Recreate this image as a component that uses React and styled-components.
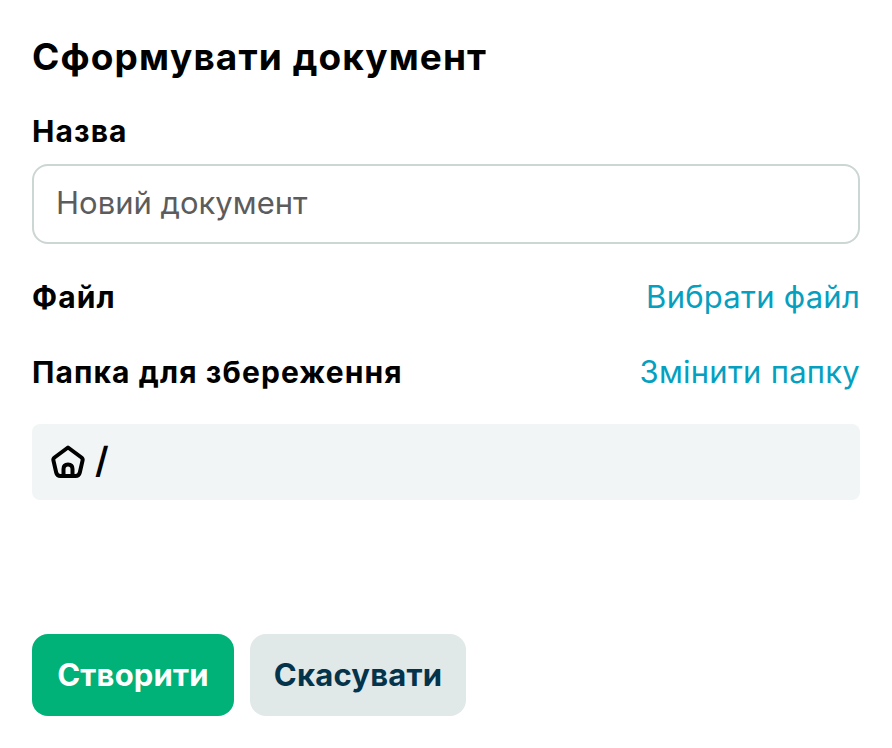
import React from "react";
import styled, { createGlobalStyle } from "styled-components";

const GlobalStyle = createGlobalStyle`
  html, body {
    margin: 0;
    padding: 0;
    background: #ffffff;
  }
  body {
    font-family: Inter, "Noto Sans", sans-serif;
  }
`;

const Page = styled.div`
  width: 892px;
  height: 748px;
  box-sizing: border-box;
  padding: 32px;
  display: flex;
  flex-direction: column;
`;

const Title = styled.h1`
  margin: 0;
  font-size: 37px;
  line-height: 50px;
  letter-spacing: 1.1px;
  font-weight: 700;
  color: #000000;
`;

const Label = styled.div`
  font-size: 30px;
  line-height: 40px;
  letter-spacing: 1.1px;
  font-weight: 700;
  color: #000000;
`;

const NameLabel = styled(Label)`
  margin-top: 29px;
  margin-bottom: 13px;
`;

const NameInput = styled.input`
  width: 100%;
  height: 80px;
  box-sizing: border-box;
  padding: 0 22px 3px;
  border: 2px solid #ccd6d4;
  border-radius: 16px;
  outline: none;
  background: #ffffff;
  font-family: inherit;
  font-size: 31px;
  color: #111111;

  &::placeholder {
    color: #5c5c5c;
    opacity: 1;
  }
`;

const Row = styled.div`
  display: flex;
  align-items: center;
  justify-content: space-between;
  height: 40px;
  margin-top: ${(p) => p.$top}px;
`;

const LinkButton = styled.a`
  font-size: 31px;
  line-height: 40px;
  letter-spacing: 0.25px;
  color: #05a0c0;
  cursor: pointer;
`;

const PathBox = styled.div`
  display: flex;
  align-items: center;
  gap: 9px;
  height: 76px;
  box-sizing: border-box;
  margin-top: 32px;
  padding: 0 18px;
  border-radius: 8px;
  background: #f1f5f5;
  font-size: 36px;
  font-weight: 600;
  color: #000000;
`;

const Slash = styled.span`
  margin-top: -4px;
`;

const Actions = styled.div`
  display: flex;
  gap: 16px;
  margin-top: auto;
`;

const Button = styled.button`
  height: 82px;
  width: ${(p) => p.$width}px;
  padding: 0 0 2px;
  border: none;
  border-radius: 16px;
  font-family: inherit;
  font-size: 31px;
  letter-spacing: 0.2px;
  font-weight: 700;
  cursor: pointer;
  background: ${(p) => (p.$primary ? "#00b277" : "#e1e8e8")};
  color: ${(p) => (p.$primary ? "#ffffff" : "#04344c")};
`;

function HomeIcon() {
  return (
    <svg width="36" height="36" viewBox="0 0 36 36" fill="none" stroke="#000" strokeWidth="4" strokeLinejoin="round" strokeLinecap="round">
      <path d="M18 3.5 L31.5 13.5 Q33 14.6 32.6 16.4 L29.8 28.5 Q29 32 25.5 32 H10.5 Q7 32 6.2 28.5 L3.4 16.4 Q3 14.6 4.5 13.5 Z" />
      <path d="M13.5 32 V25 Q13.5 20.5 18 20.5 Q22.5 20.5 22.5 25 V32" />
    </svg>
  );
}

export default function App() {
  return (
    <Page>
      <GlobalStyle />
      <Title>Сформувати документ</Title>
      <NameLabel>Назва</NameLabel>
      <NameInput placeholder="Новий документ" />
      <Row $top={33}>
        <Label>Файл</Label>
        <LinkButton>Вибрати файл</LinkButton>
      </Row>
      <Row $top={35}>
        <Label>Папка для збереження</Label>
        <LinkButton>Змінити папку</LinkButton>
      </Row>
      <PathBox>
        <HomeIcon />
        <Slash>/</Slash>
      </PathBox>
      <Actions>
        <Button $primary $width={202}>Створити</Button>
        <Button $width={216}>Скасувати</Button>
      </Actions>
    </Page>
  );
}
